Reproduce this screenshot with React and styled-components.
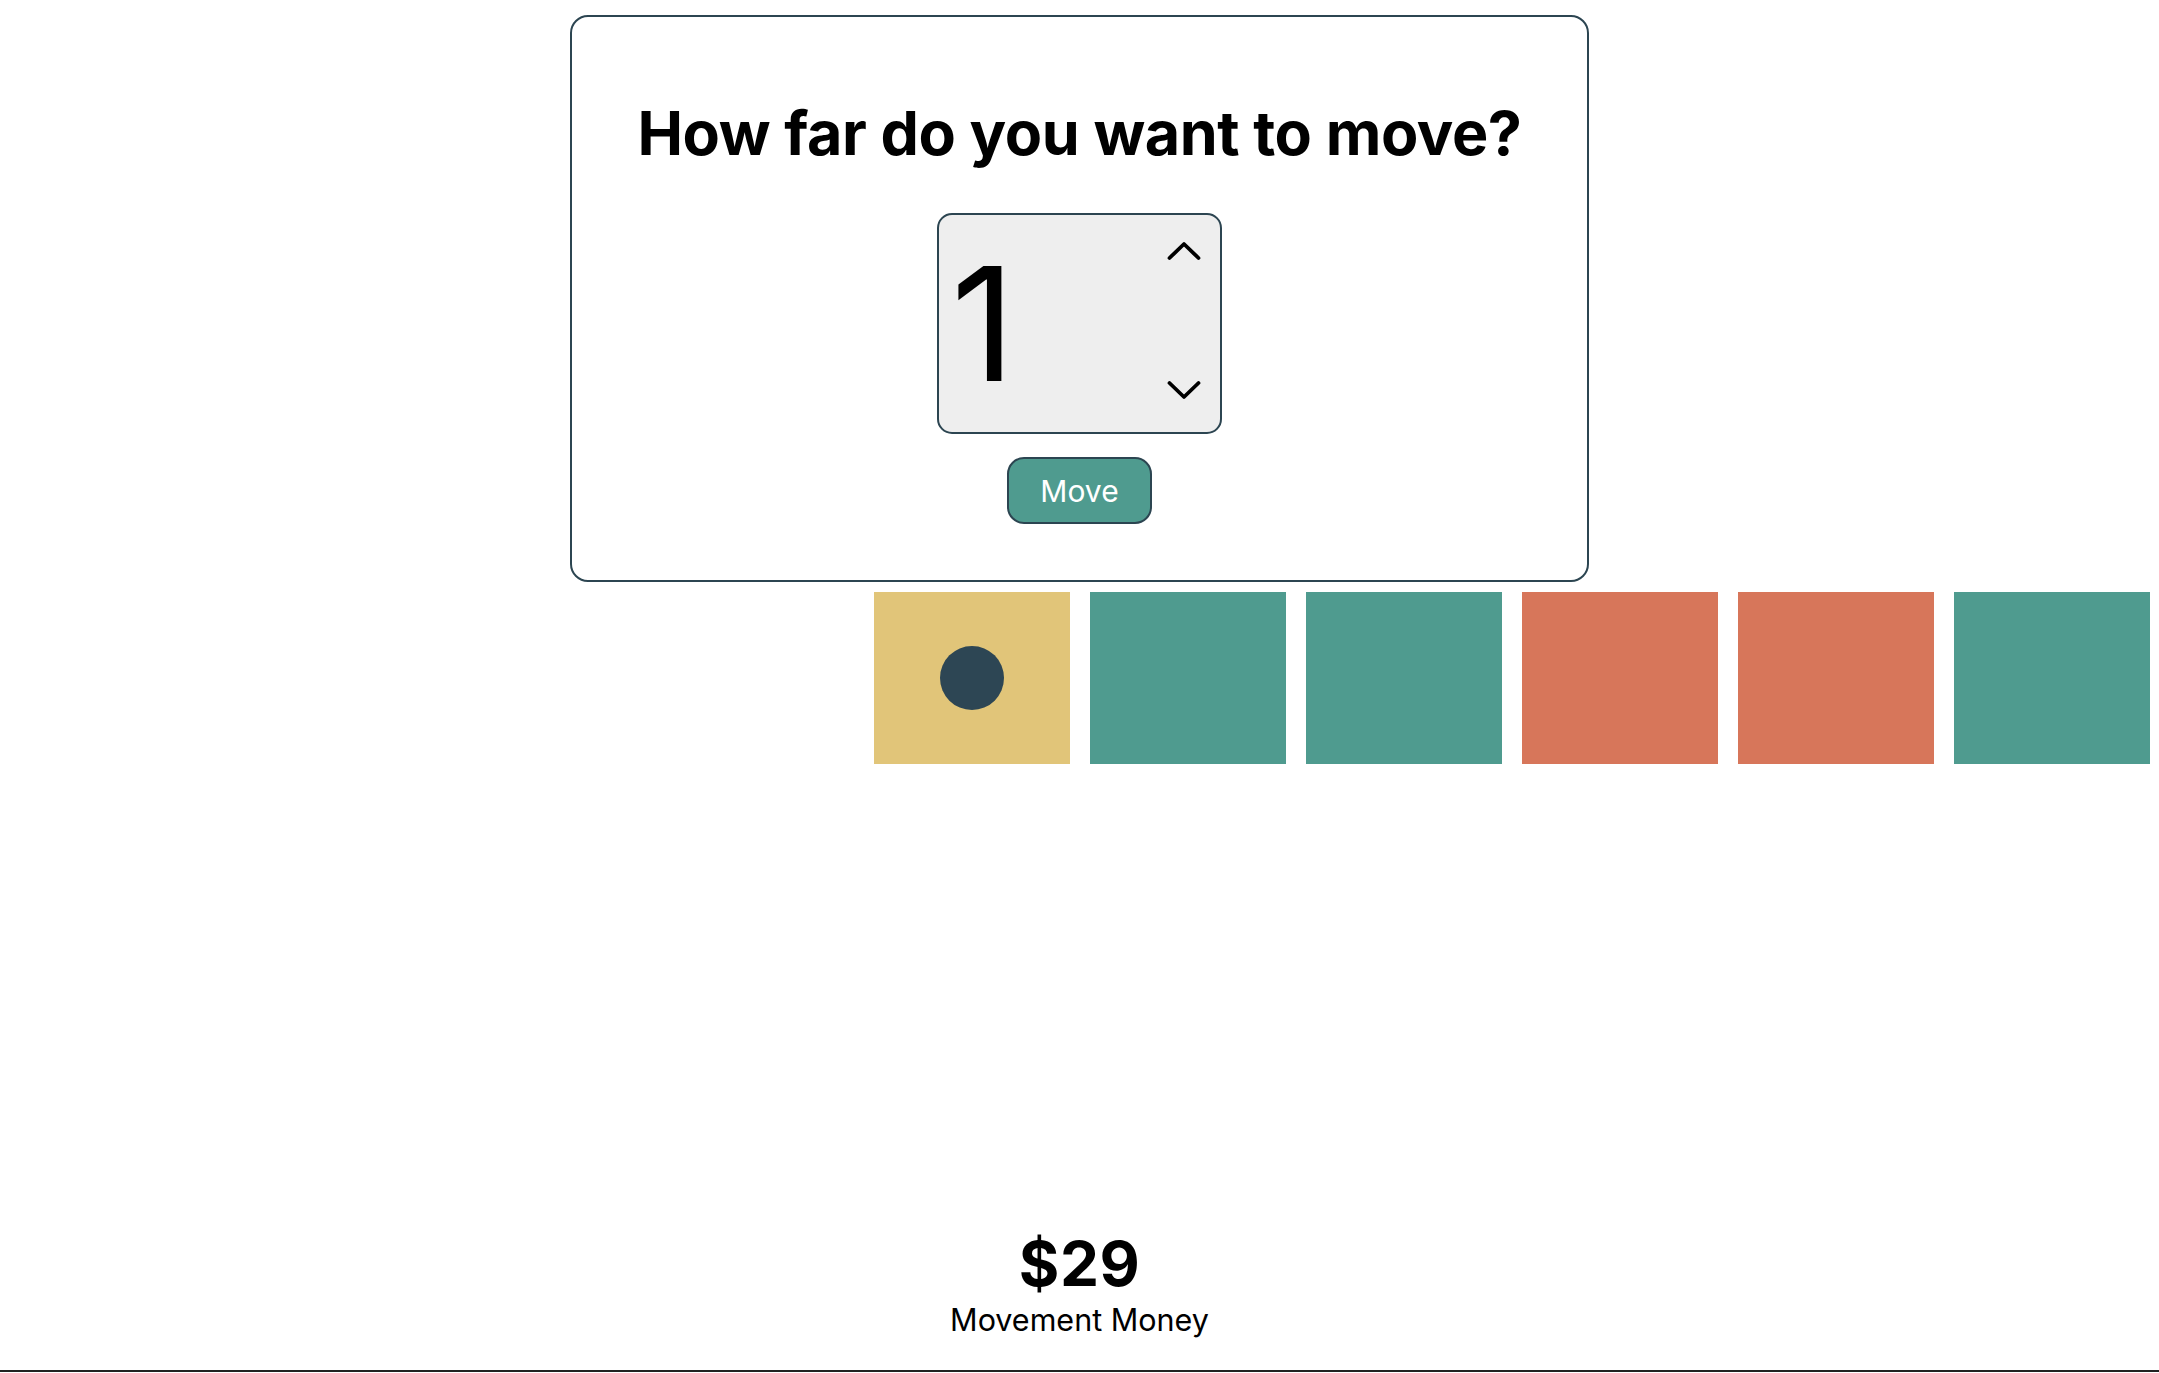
import { useState } from "react";
import styled, { createGlobalStyle } from "styled-components";

const GlobalStyle = createGlobalStyle`
  html, body {
    margin: 0;
    padding: 0;
    background: #ffffff;
    font-family: Inter, "Noto Sans", "Liberation Sans", sans-serif;
    color: #000000;
  }
`;

const TILES = ["yellow", "teal", "teal", "orange", "orange", "teal"];

const tileColors = {
  yellow: "#e1c579",
  teal: "#4f9b8f",
  orange: "#d7765a",
};

export default function App() {
  const [distance, setDistance] = useState(1);
  const playerPosition = 0;

  return (
    <>
      <GlobalStyle />
      <Page>
        <Dialog>
          <Title>How far do you want to move?</Title>
          <NumberField>
            <NumberInput
              type="text"
              value={distance}
              onChange={(event) => setDistance(event.target.value)}
            />
            <Spinner>
              <SpinButton type="button" aria-label="increase" onClick={() => setDistance(Number(distance) + 1)}>
                <svg width="34" height="20" viewBox="0 0 34 20" fill="none">
                  <path d="M2.5 17L17 3L31.5 17" stroke="#000" strokeWidth="3.8" strokeLinecap="round" strokeLinejoin="round" />
                </svg>
              </SpinButton>
              <SpinButton type="button" aria-label="decrease" onClick={() => setDistance(Math.max(1, Number(distance) - 1))}>
                <svg width="34" height="20" viewBox="0 0 34 20" fill="none">
                  <path d="M2.5 3L17 17L31.5 3" stroke="#000" strokeWidth="3.8" strokeLinecap="round" strokeLinejoin="round" />
                </svg>
              </SpinButton>
            </Spinner>
          </NumberField>
          <MoveButton type="button">Move</MoveButton>
        </Dialog>

        <Board>
          {TILES.map((tile, index) => (
            <Tile key={index} $color={tile}>
              {index === playerPosition && <Player />}
            </Tile>
          ))}
        </Board>

        <Wallet>
          <Amount>$29</Amount>
          <WalletLabel>Movement Money</WalletLabel>
        </Wallet>
        <Footer />
      </Page>
    </>
  );
}

const Page = styled.div`
  min-height: 100vh;
  box-sizing: border-box;
  display: flex;
  flex-direction: column;
  padding-top: 15px;
  overflow: hidden;
`;

const Dialog = styled.section`
  box-sizing: border-box;
  width: 1019px;
  height: 567px;
  margin: 0 auto;
  padding: 80px 0 0;
  border: 2px solid #2c4551;
  border-radius: 18px;
  display: flex;
  flex-direction: column;
  align-items: center;
`;

const Title = styled.h1`
  margin: 0 0 44px;
  font-size: 61px;
  line-height: 72px;
  font-weight: 700;
  letter-spacing: -0.4px;
  text-align: center;
`;

const NumberField = styled.div`
  box-sizing: border-box;
  width: 285px;
  height: 221px;
  display: flex;
  align-items: stretch;
  background: #eeeeee;
  border: 2px solid #2c4551;
  border-radius: 15px;
  overflow: hidden;
`;

const NumberInput = styled.input`
  flex: 1;
  min-width: 0;
  padding: 0 0 0 12px;
  border: none;
  background: transparent;
  font-family: Inter, "Noto Sans", "Liberation Sans", sans-serif;
  font-size: 158px;
  font-weight: 400;
  color: #000;
  outline: none;
`;

const Spinner = styled.div`
  width: 72px;
  display: flex;
  flex-direction: column;
  justify-content: space-between;
  align-items: center;
  padding: 26px 0 32px;
`;

const SpinButton = styled.button`
  padding: 0;
  border: none;
  background: none;
  display: flex;
  cursor: pointer;
`;

const MoveButton = styled.button`
  box-sizing: border-box;
  margin-top: 23px;
  width: 145px;
  height: 67px;
  border: 2px solid #2c4551;
  border-radius: 17px;
  background: #4f9b8f;
  color: #ffffff;
  font-family: Inter, "Noto Sans", "Liberation Sans", sans-serif;
  font-size: 30px;
  font-weight: 400;
  padding-top: 2px;
  cursor: pointer;
`;

const Board = styled.div`
  margin-top: 10px;
  padding-left: 874px;
  display: flex;
  gap: 20px;
`;

const Tile = styled.div`
  flex: 0 0 196px;
  height: 172px;
  background: ${({ $color }) => tileColors[$color]};
  display: flex;
  align-items: center;
  justify-content: center;
`;

const Player = styled.div`
  width: 64px;
  height: 64px;
  border-radius: 50%;
  background: #2d4654;
`;

const Wallet = styled.div`
  margin-top: auto;
  padding-bottom: 32px;
  display: flex;
  flex-direction: column;
  align-items: center;
  gap: 3px;
`;

const Amount = styled.div`
  font-size: 62px;
  line-height: 70px;
  font-weight: 700;
  letter-spacing: 0.5px;
`;

const WalletLabel = styled.div`
  font-size: 30.5px;
  line-height: 36px;
  font-weight: 400;
`;

const Footer = styled.footer`
  height: 3px;
  border-top: 2px solid #222222;
  box-sizing: border-box;
`;
